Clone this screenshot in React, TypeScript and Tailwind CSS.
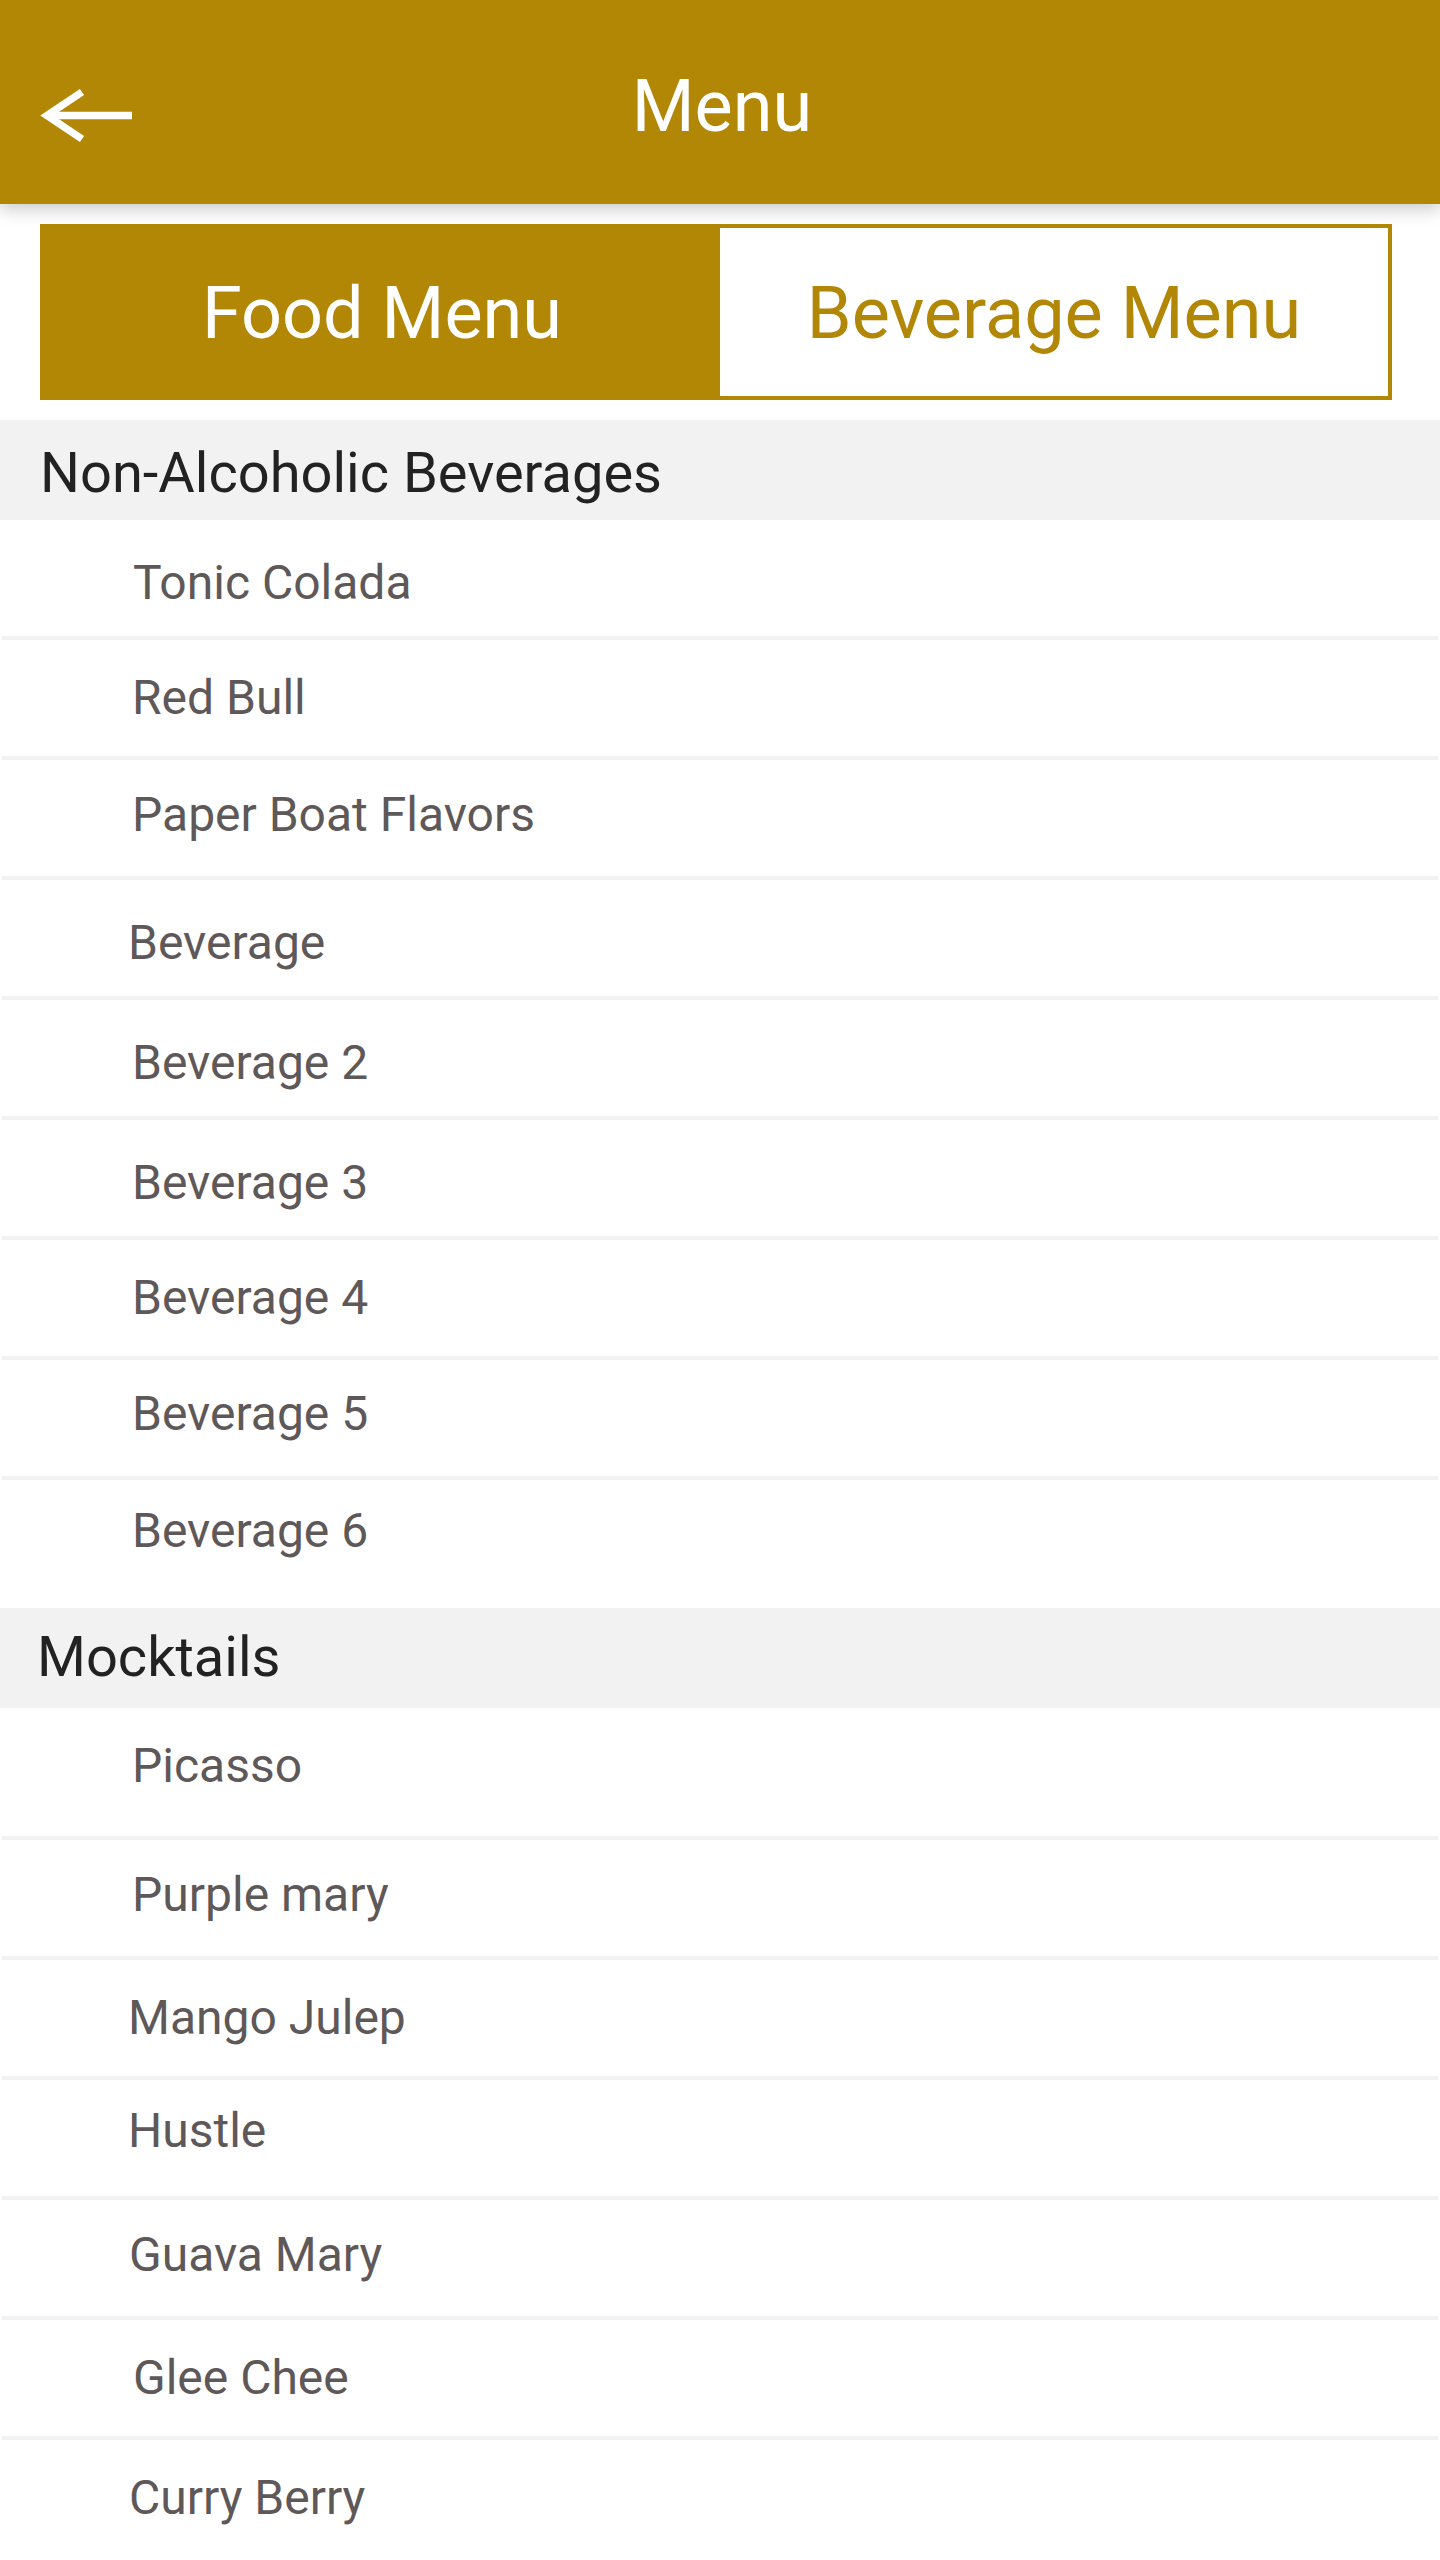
import React from 'react';

interface MenuItem {
  name: string;
  rowClass: string;
  textClass: string;
  divider?: boolean;
}

interface MenuSection {
  title: string;
  titleClass: string;
  items: MenuItem[];
}

const sections: MenuSection[] = [
  {
    title: 'Non-Alcoholic Beverages',
    titleClass: 'pl-[40px] pt-[6px]',
    items: [
      { name: 'Tonic Colada', rowClass: 'h-[116px] pt-[10px]', textClass: 'pl-[133px]', divider: true },
      { name: 'Red Bull', rowClass: 'h-[116px]', textClass: 'pl-[132px]', divider: true },
      { name: 'Paper Boat Flavors', rowClass: 'h-[116px] pb-[6px]', textClass: 'pl-[132px]', divider: true },
      { name: 'Beverage', rowClass: 'h-[116px] pt-[10px]', textClass: 'pl-[128px]', divider: true },
      { name: 'Beverage 2', rowClass: 'h-[116px] pt-[10px]', textClass: 'pl-[132px]', divider: true },
      { name: 'Beverage 3', rowClass: 'h-[116px] pt-[10px]', textClass: 'pl-[132px]', divider: true },
      { name: 'Beverage 4', rowClass: 'h-[116px]', textClass: 'pl-[132px]', divider: true },
      { name: 'Beverage 5', rowClass: 'h-[116px] pb-[8px]', textClass: 'pl-[132px]', divider: true },
      { name: 'Beverage 6', rowClass: 'h-[128px] pb-[26px]', textClass: 'pl-[132px]' },
    ],
  },
  {
    title: 'Mocktails',
    titleClass: 'pl-[37px] pb-[2px]',
    items: [
      { name: 'Picasso', rowClass: 'h-[128px] pb-[12px]', textClass: 'pl-[132px]', divider: true },
      { name: 'Purple mary', rowClass: 'h-[116px] pb-[6px]', textClass: 'pl-[132px]', divider: true },
      { name: 'Mango Julep', rowClass: 'h-[116px]', textClass: 'pl-[128px]', divider: true },
      { name: 'Hustle', rowClass: 'h-[116px] pb-[14px]', textClass: 'pl-[128px]', divider: true },
      { name: 'Guava Mary', rowClass: 'h-[116px] pb-[6px]', textClass: 'pl-[129px]', divider: true },
      { name: 'Glee Chee', rowClass: 'h-[116px]', textClass: 'pl-[133px]', divider: true },
      { name: 'Curry Berry', rowClass: 'h-[116px]', textClass: 'pl-[129px]' },
    ],
  },
];

const BackArrow = () => (
  <svg width="140" height="204" viewBox="0 0 140 204" fill="none">
    <path d="M47 115.5 H132" stroke="white" strokeWidth="7.5" />
    <polyline points="82,92 47,115.5 82,139" stroke="white" strokeWidth="7.5" strokeLinejoin="miter" fill="none" />
  </svg>
);

export default function App() {
  return (
    <div className="min-h-[2560px] w-full bg-white overflow-hidden font-['Roboto','Liberation_Sans',sans-serif]">
      {/* top bar */}
      <header className="relative z-10 h-[204px] bg-[#b38706] grid grid-cols-[1fr_auto_1fr] shadow-[0_6px_16px_rgba(0,0,0,0.2)]">
        <div className="flex items-start">
          <BackArrow />
        </div>
        <h1 className="self-center pt-[10px] pl-[4px] text-[72px] leading-none text-white font-normal">Menu</h1>
        <div />
      </header>

      {/* tabs */}
      <div className="ml-[40px] mr-[48px] mt-[20px] h-[176px] flex border-4 border-[#b38706]">
        <button className="w-[676px] flex items-center justify-center pt-[4px] bg-[#b38706] text-white text-[72px] leading-none">
          Food Menu
        </button>
        <button className="flex-1 flex items-center justify-center pt-[4px] bg-white text-[#b38706] text-[72px] leading-none">
          Beverage Menu
        </button>
      </div>

      <div className="mt-[20px]">
        {sections.map((section) => (
          <section key={section.title}>
            <div className={`h-[100px] bg-[#f2f2f2] flex items-center ${section.titleClass}`}>
              <h2 className="text-[56px] leading-none text-[#222222] font-normal">{section.title}</h2>
            </div>
            {section.items.map((item) => (
              <div key={item.name}>
                <div className={`flex items-center ${item.rowClass}`}>
                  <span className={`text-[48px] leading-none text-[#5f5859] ${item.textClass}`}>{item.name}</span>
                </div>
                {item.divider && <div className="h-[4px] mx-[2px] bg-[#f2f2f2]" />}
              </div>
            ))}
          </section>
        ))}
      </div>
    </div>
  );
}
